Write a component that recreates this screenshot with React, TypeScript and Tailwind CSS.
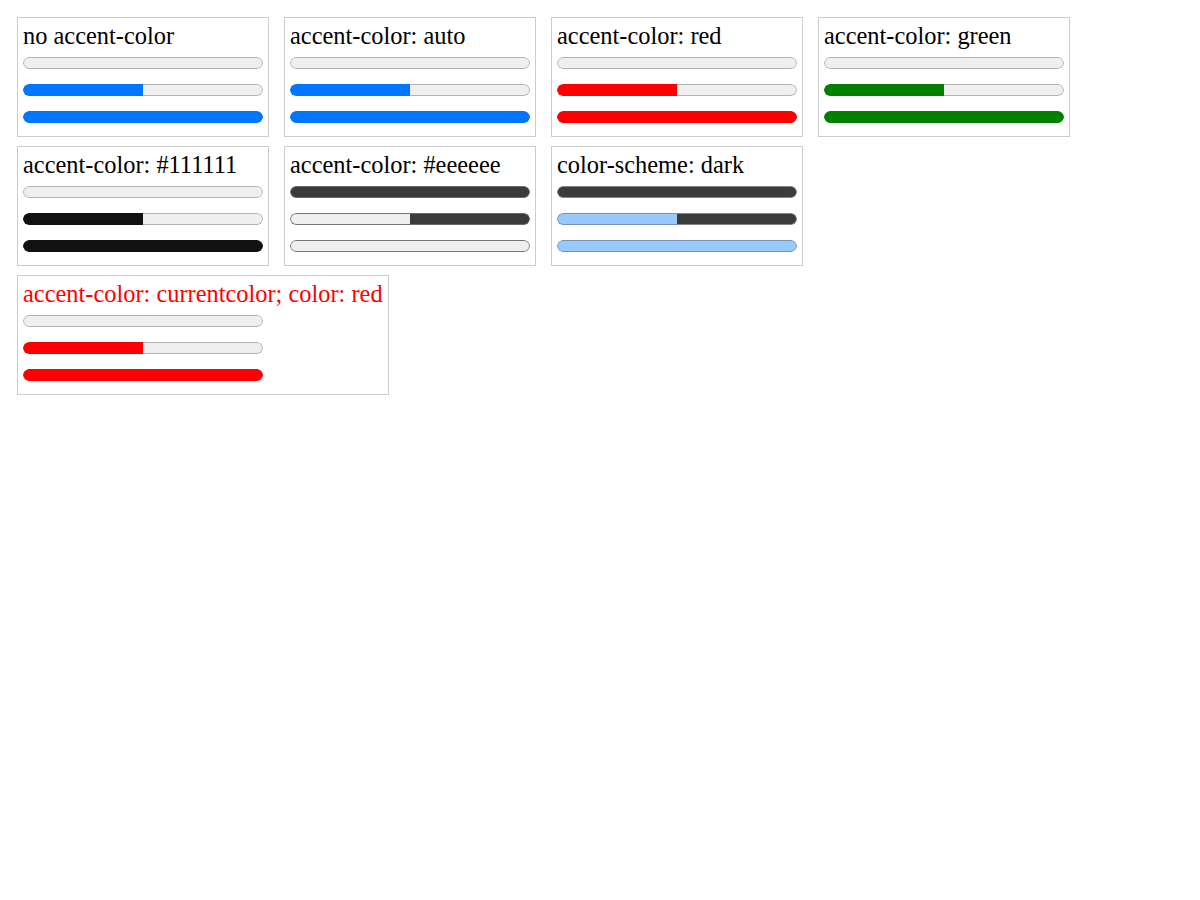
type Look = {
  fill: string;
  fillBorder: string;
  track: string;
  trackBorder: string;
};

const light = (fill: string): Look => ({
  fill,
  fillBorder: fill,
  track: "#efefef",
  trackBorder: "#b2b2b2",
});

function Bar({ value, look }: { value: number; look: Look }) {
  const hasFill = value > 0;
  const hasRest = value < 1;
  return (
    <div className="flex h-[12px] w-[240px] overflow-hidden rounded-full">
      {hasFill && (
        <div
          className={
            "h-full shrink-0 border-y border-l rounded-l-full " +
            (hasRest ? "border-r-0" : "border-r rounded-r-full")
          }
          style={{ width: `${value * 100}%`, background: look.fill, borderColor: look.fillBorder }}
        />
      )}
      {hasRest && (
        <div
          className={
            "h-full flex-1 border-y border-r rounded-r-full " +
            (hasFill ? "border-l-0" : "border-l rounded-l-full")
          }
          style={{ background: look.track, borderColor: look.trackBorder }}
        />
      )}
    </div>
  );
}

function Card({ title, look, red }: { title: string; look: Look; red?: boolean }) {
  return (
    <div className="flex flex-col border border-[#cccccc] p-[5px] pb-[13px]">
      <div className={"text-[24.4px] leading-[25px] whitespace-nowrap " + (red ? "text-[#ff0000]" : "text-black")}>
        {title}
      </div>
      <div className="mt-[9px] flex flex-col gap-[15px]">
        <Bar value={0} look={look} />
        <Bar value={0.5} look={look} />
        <Bar value={1} look={look} />
      </div>
    </div>
  );
}

const inverted: Look = {
  fill: "#efefef",
  fillBorder: "#767676",
  track: "#3b3b3b",
  trackBorder: "#6b6b6b",
};

const dark: Look = {
  fill: "#99c8ff",
  fillBorder: "#7b93b3",
  track: "#3b3b3b",
  trackBorder: "#858585",
};

export default function App() {
  return (
    <div
      className="min-h-[900px] bg-white pl-[17px] pt-[17px] flex flex-col gap-[9px] items-start"
      style={{ fontFamily: '"Liberation Serif", "Times New Roman", serif' }}
    >
      <div className="flex gap-[15px]">
        <Card title="no accent-color" look={light("#0075ff")} />
        <Card title="accent-color: auto" look={light("#0075ff")} />
        <Card title="accent-color: red" look={light("#ff0000")} />
        <Card title="accent-color: green" look={light("#008000")} />
      </div>
      <div className="flex gap-[15px]">
        <Card title="accent-color: #111111" look={light("#111111")} />
        <Card title="accent-color: #eeeeee" look={inverted} />
        <Card title="color-scheme: dark" look={dark} />
      </div>
      <div className="flex gap-[15px]">
        <Card title="accent-color: currentcolor; color: red" look={light("#ff0000")} red />
      </div>
    </div>
  );
}
